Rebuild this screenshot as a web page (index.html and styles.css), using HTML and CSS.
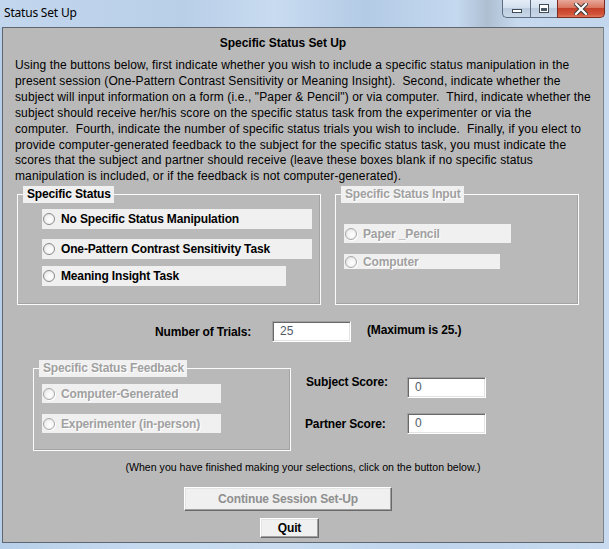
FILE: index.html
```html
<!DOCTYPE html>
<html>
<head>
<meta charset="utf-8">
<title>Status Set Up</title>
<link rel="stylesheet" href="styles.css">
</head>
<body>
<div class="window">
  <div class="titlebar">
    <span class="title">Status Set Up</span>
    <div class="caption-btns">
      <div class="cb cb-min"><span class="min-glyph"></span></div>
      <div class="cb cb-max"><span class="max-glyph"></span></div>
      <div class="cb cb-close">
        <svg width="14" height="12" viewBox="0 0 14 12">
          <path d="M2 1 L12 11 M12 1 L2 11" stroke="#3b3b3b" stroke-width="4.2" stroke-linecap="square" fill="none"/>
          <path d="M2 1 L12 11 M12 1 L2 11" stroke="#ffffff" stroke-width="2.2" stroke-linecap="square" fill="none"/>
        </svg>
      </div>
    </div>
  </div>
  <div class="client">
    <h1 class="heading">Specific Status Set Up</h1>
    <p class="intro">Using the buttons below, first indicate whether you wish to include a specific status manipulation in the<br>present session (One-Pattern Contrast Sensitivity or Meaning Insight).&nbsp; Second, indicate whether the<br>subject will input information on a form (i.e., "Paper &amp; Pencil") or via computer.&nbsp; Third, indicate whether the<br>subject should receive her/his score on the specific status task from the experimenter or via the<br>computer.&nbsp; Fourth, indicate the number of specific status trials you wish to include.&nbsp; Finally, if you elect to<br>provide computer-generated feedback to the subject for the specific status task, you must indicate the<br>scores that the subject and partner should receive (leave these boxes blank if no specific status<br>manipulation is included, or if the feedback is not computer-generated).</p>

    <div class="groups">
      <fieldset class="group g-status">
        <legend>Specific Status</legend>
        <div class="opts opts-status">
          <div class="opt w270 h20"><span class="radio"></span>No Specific Status Manipulation</div>
          <div class="opt w270 h20 gap10"><span class="radio"></span>One-Pattern Contrast Sensitivity Task</div>
          <div class="opt w244 h20 gap7"><span class="radio"></span>Meaning Insight Task</div>
        </div>
      </fieldset>
      <fieldset class="group g-input disabled">
        <legend>Specific Status Input</legend>
        <div class="opts opts-input">
          <div class="opt w167 h19"><span class="radio"></span>Paper _Pencil</div>
          <div class="opt w156 h15 gap11"><span class="radio"></span>Computer</div>
        </div>
      </fieldset>
    </div>

    <div class="trials-row">
      <span class="field-label">Number of Trials:</span>
      <span class="input">25</span>
      <span class="hint">(Maximum is 25.)</span>
    </div>

    <div class="feedback-row">
      <fieldset class="group g-feedback disabled">
        <legend>Specific Status Feedback</legend>
        <div class="opts opts-feedback">
          <div class="opt w179 h19"><span class="radio"></span>Computer-Generated</div>
          <div class="opt w179 h19 gap11"><span class="radio"></span>Experimenter (in-person)</div>
        </div>
      </fieldset>
      <div class="scores">
        <div class="score-row">
          <span class="score-label">Subject Score:</span>
          <span class="input">0</span>
        </div>
        <div class="score-row">
          <span class="score-label">Partner Score:</span>
          <span class="input">0</span>
        </div>
      </div>
    </div>

    <p class="note">(When you have finished making your selections, click on the button below.)</p>
    <div class="btn btn-continue">Continue Session Set-Up</div>
    <div class="btn btn-quit">Quit</div>
  </div>
</div>
</body>
</html>
```

FILE: styles.css
```css
* { box-sizing: border-box; }
html, body { margin: 0; padding: 0; }
body {
  width: 609px;
  height: 549px;
  overflow: hidden;
  background: #bcd4ee;
  font-family: "Liberation Sans", Arial, sans-serif;
}
.window {
  width: 609px;
  height: 549px;
  background: linear-gradient(to right, #b7cfe9 0%, #c4d9ef 20%, #c9dcf0 45%, #bfd5ed 70%, #c7daef 100%);
  display: flex;
  flex-direction: column;
}
.titlebar {
  height: 27px;
  display: flex;
  justify-content: space-between;
  align-items: flex-start;
  background: linear-gradient(to right, #c2d7ee 0%, #b9cfe8 30%, #c8dbf0 45%, #b4cbe6 60%, #c4d8ef 75%, #aebfd2 80%, #c6d9ee 85%, #c2d6ed 100%);
}
.title {
  font-family: "Noto Sans", "DejaVu Sans", sans-serif;
  font-size: 12px;
  color: #000;
  line-height: 16px;
  margin: 5px 0 0 4px;
  letter-spacing: -0.2px;
}
.caption-btns {
  display: flex;
  margin-right: 4px;
  height: 18px;
}
.cb {
  height: 18px;
  display: flex;
  align-items: center;
  justify-content: center;
  border: 1px solid #5d6c80;
  border-top: none;
}
.cb-min {
  width: 28px;
  border-right: none;
  border-bottom-left-radius: 5px;
  background: linear-gradient(#e4edf7 0%, #d3e0ee 45%, #bccbdd 50%, #c9d8e9 100%);
  padding-top: 5px;
}
.cb-max {
  width: 27px;
  border-right: none;
  background: linear-gradient(#e4edf7 0%, #d3e0ee 45%, #bccbdd 50%, #c9d8e9 100%);
}
.cb-close {
  width: 48px;
  border-bottom-right-radius: 5px;
  background: linear-gradient(#e7a89a 0%, #d9765f 45%, #c4402a 50%, #d3553a 85%, #e07a5e 100%);
  border-color: #7b2b20;
}
.min-glyph {
  display: block;
  width: 10px;
  height: 4px;
  background: #fff;
  border: 1px solid #3f4a57;
}
.max-glyph {
  display: block;
  width: 10px;
  height: 9px;
  border: 1px solid #3f4a57;
  background: #fff;
  position: relative;
}
.max-glyph::after {
  content: "";
  position: absolute;
  left: 1px; top: 3px;
  width: 6px; height: 3px;
  background: #4b5866;
}

.client {
  margin: 0 5px 0 2px;
  height: 516px;
  background: #b9b9b9;
  border: 1px solid #5f6670;
  border-right-color: #7a828c;
  padding-top: 8px;
  display: flex;
  flex-direction: column;
  align-items: flex-start;
  font-size: 12px;
  color: #000;
}
.heading {
  margin: 0;
  width: 100%;
  text-align: center;
  font-size: 12px;
  line-height: 15px;
  font-weight: bold;
  padding-right: 40px;
  letter-spacing: -0.05px;
}
.intro {
  margin: 7px 0 0 12px;
  font-size: 12px;
  line-height: 15.9px;
  letter-spacing: 0.12px;
  white-space: nowrap;
}
.groups {
  display: flex;
  gap: 14px;
  margin: 1px 0 0 14px;
}
.group {
  margin: 0;
  padding: 0;
  border: 1px solid #fbfbfb;
  box-shadow: -1px -1px 0 #a3a3a3 inset;
}
.group legend {
  margin-left: 5px;
  padding: 0 3px 0 4px;
  background: #f0f0f0;
  font-weight: bold;
  font-size: 12px;
  line-height: 17px;
  height: 17px;
  letter-spacing: -0.15px;
}
.disabled legend,
.disabled .opt {
  color: #a0a0a0;
  text-shadow: 1px 1px 0 #ffffff;
}
.g-status { width: 304px; }
.g-input { width: 244px; }
.g-feedback { width: 258px; }
.opts {
  display: flex;
  flex-direction: column;
  align-items: flex-start;
}
.opts-status { height: 101px; padding: 6px 0 0 24px; }
.opts-input { height: 101px; padding: 21px 0 0 8px; }
.opts-feedback { height: 73px; padding: 7px 0 0 8px; }
.opt {
  background: #f0f0f0;
  display: flex;
  align-items: center;
  font-weight: bold;
  font-size: 12px;
  letter-spacing: -0.15px;
  white-space: nowrap;
}
.w270 { width: 270px; }
.w244 { width: 244px; }
.w167 { width: 167px; }
.w156 { width: 156px; }
.w179 { width: 179px; }
.h20 { height: 20px; }
.h19 { height: 19px; }
.h15 { height: 15px; }
.gap10 { margin-top: 10px; }
.gap7 { margin-top: 7px; }
.gap11 { margin-top: 11px; }
.radio {
  width: 12px;
  height: 12px;
  border-radius: 50%;
  border: 1px solid #8a8a8a;
  background: radial-gradient(circle at 60% 60%, #ffffff 0%, #f4f4f4 45%, #d9d9d9 100%);
  margin: 0 6px 0 1px;
  flex: none;
}
.disabled .radio {
  border-color: #a8a8a8;
  box-shadow: 1px 1px 0 #ffffff;
}

.trials-row {
  display: flex;
  align-items: center;
  margin: 16px 0 0 152px;
  height: 21px;
}
.field-label {
  font-weight: bold;
  width: 117px;
  letter-spacing: -0.15px;
}
.hint { font-weight: bold; margin: -4px 0 0 16px; letter-spacing: -0.15px; }
.input {
  width: 79px;
  height: 21px;
  background: #fff;
  border: 1px solid;
  border-color: #a0a0a0 #ffffff #ffffff #a0a0a0;
  box-shadow: inset 1px 1px 0 #696969, inset -1px -1px 0 #e3e3e3;
  color: #505a66;
  font-size: 12px;
  line-height: 19px;
  padding-left: 7px;
}

.feedback-row {
  display: flex;
  margin: 18px 0 0 30px;
}
.scores {
  display: flex;
  flex-direction: column;
  gap: 15px;
  margin: 17px 0 0 15px;
}
.score-row {
  display: flex;
  align-items: center;
}
.score-label {
  font-weight: bold;
  width: 101px;
  margin-top: -11px;
  letter-spacing: -0.15px;
}
.score-row:nth-child(2) .score-label { margin-top: 0; margin-left: -1px; width: 102px; }

.note {
  margin: 9px 0 0 0;
  width: 100%;
  text-align: center;
  font-size: 10.6px;
  line-height: 14px;
}
.btn {
  background: #f0f0f0;
  border: 1px solid;
  border-color: #ffffff #696969 #696969 #ffffff;
  box-shadow: inset -1px -1px 0 #a0a0a0, inset 1px 1px 0 #e3e3e3;
  display: flex;
  align-items: center;
  justify-content: center;
  font-weight: bold;
  font-size: 12px;
  letter-spacing: -0.15px;
}
.btn-continue {
  width: 208px;
  height: 24px;
  margin: 13px 0 0 181px;
  color: #8f8f8f;
}
.btn-quit {
  width: 59px;
  height: 20px;
  margin: 7px 0 0 257px;
  color: #000;
}
```
